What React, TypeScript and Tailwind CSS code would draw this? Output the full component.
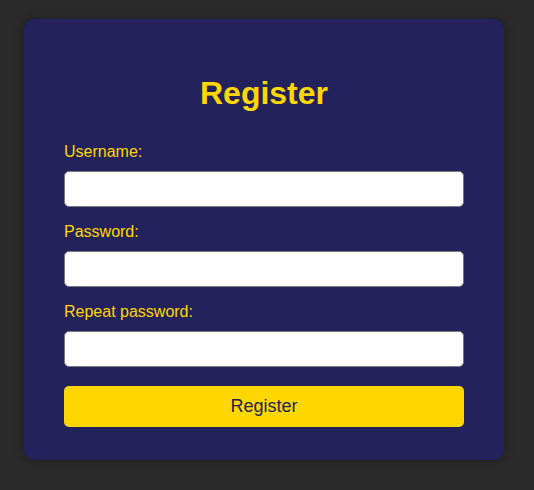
import React, { useState } from "react";

function Field({
  label,
  type,
  value,
  onChange,
}: {
  label: string;
  type: string;
  value: string;
  onChange: (v: string) => void;
}) {
  return (
    <div className="mb-[16px] flex flex-col">
      <label className="mb-[10px] text-[16px] leading-[18px] text-[#ffd700]">
        {label}
      </label>
      <input
        type={type}
        value={value}
        onChange={(e) => onChange(e.target.value)}
        className="h-[36px] w-full rounded-[5px] border border-[#7a7a7a] bg-white px-2 text-[16px] text-black outline-none"
      />
    </div>
  );
}

export default function App() {
  const [username, setUsername] = useState("");
  const [password, setPassword] = useState("");
  const [repeat, setRepeat] = useState("");

  return (
    <div
      className="min-h-[490px] w-full bg-[#2b2b2b] pt-[19px] pl-[24px]"
      style={{ fontFamily: '"Liberation Sans", Arial, sans-serif' }}
    >
      <div className="w-[480px] rounded-[10px] bg-[#23225c] px-[40px] pt-[56px] pb-[33px] shadow-[0_0_10px_rgba(0,0,0,0.35)]">
        <h1 className="mb-[31px] text-center text-[32px] leading-[37px] font-bold text-[#ffd700]">
          Register
        </h1>
        <Field label="Username:" type="text" value={username} onChange={setUsername} />
        <Field label="Password:" type="password" value={password} onChange={setPassword} />
        <Field label="Repeat password:" type="password" value={repeat} onChange={setRepeat} />
        <button className="mt-[3px] h-[41px] w-full rounded-[5px] bg-[#ffd700] text-[18px] text-[#23225c]">
          Register
        </button>
      </div>
    </div>
  );
}
